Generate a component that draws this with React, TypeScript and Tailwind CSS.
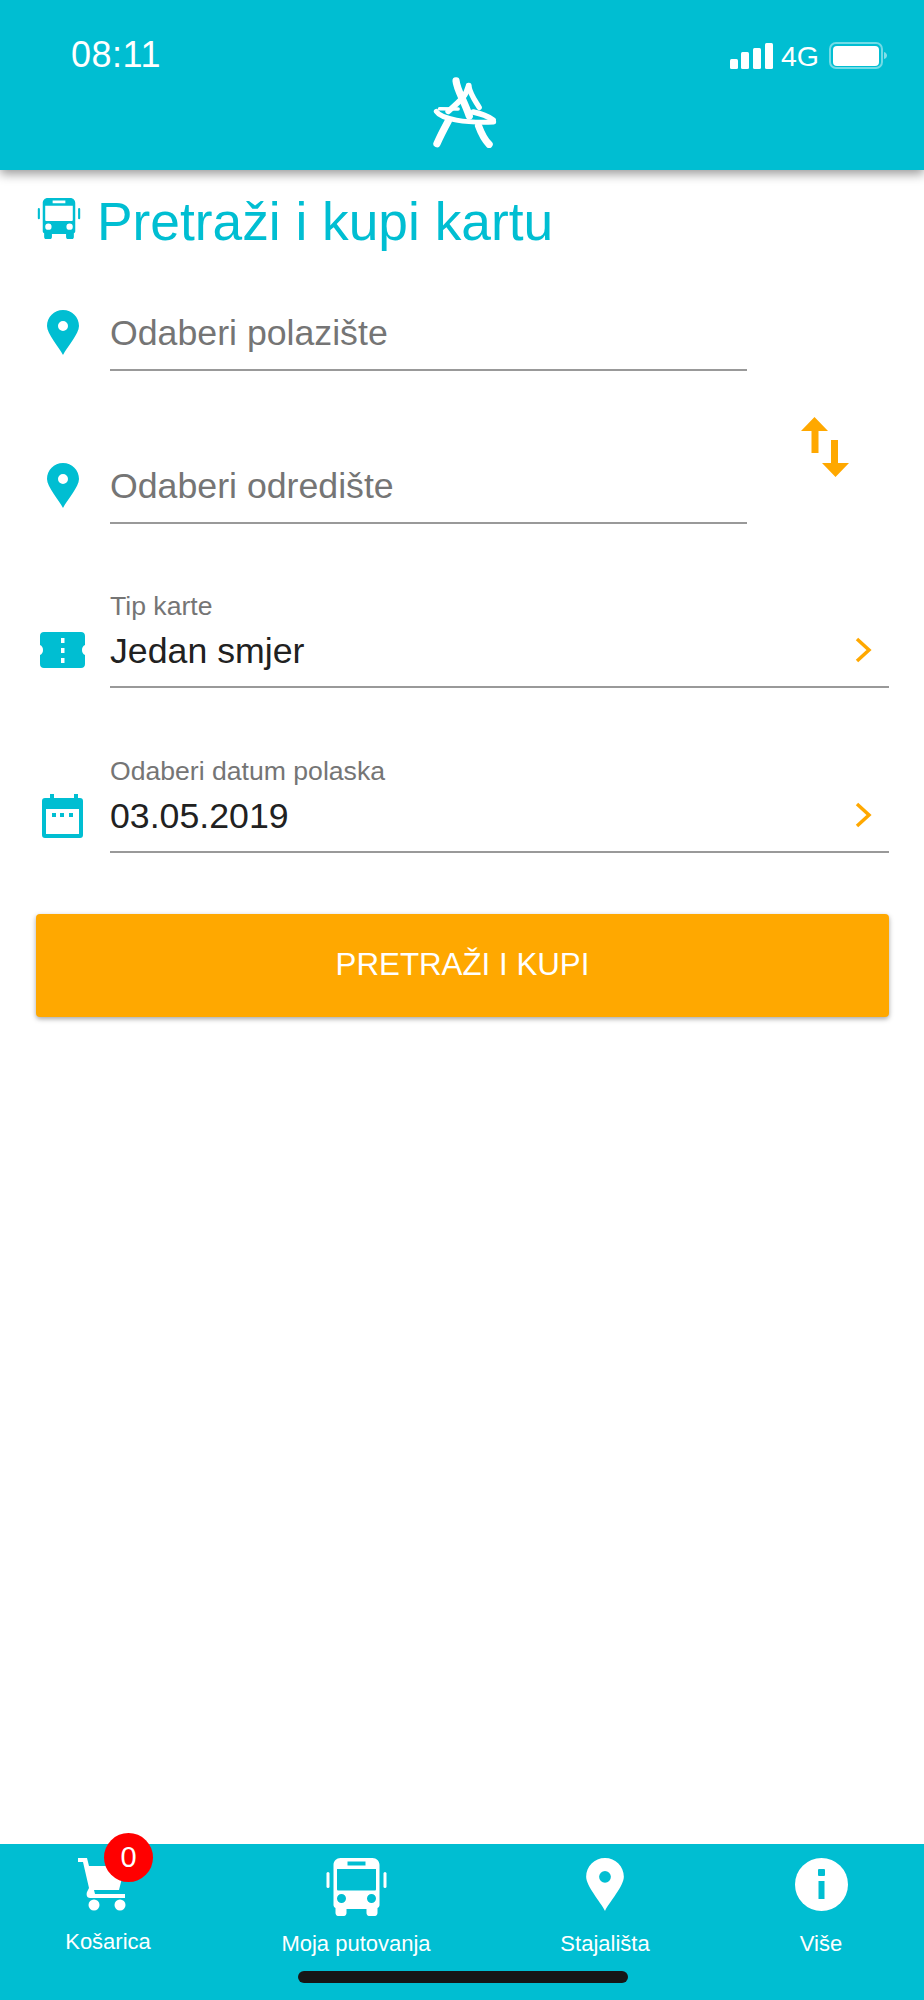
const font = { fontFamily: '"Liberation Sans", Arial, sans-serif' };

function BusIcon({ className }: { className: string }) {
  return (
    <svg viewBox="0 0 60 58" className={className} fill="currentColor">
      <path
        fillRule="evenodd"
        d="M14 0h32c4 0 7 3 7 7v40c0 1.500-1 2.500-2 3v5c0 1.500-1 3-2.500 3h-6c-1.500 0-2.500-1.500-2.500-3v-4H20v4c0 1.500-1 3-2.500 3h-6C10 58 9 56.500 9 55v-5c-1-.5-2-1.500-2-3V7c0-4 3-7 7-7zM21 3.500v4h18v-4zM10.500 11v20c0 1 .5 1.500 1.500 1.500h36c1 0 1.500-.5 1.500-1.500V11zM15 36a4.500 4.500 0 1 0 0 9 4.500 4.500 0 0 0 0-9zM45 36a4.500 4.500 0 1 0 0 9 4.500 4.500 0 0 0 0-9z"
      />
      <rect x="0" y="14" width="3" height="16" rx="1.500" />
      <rect x="57" y="14" width="3" height="16" rx="1.500" />
    </svg>
  );
}

function PinIcon({ className }: { className: string }) {
  return (
    <svg viewBox="0 0 32 45" className={className} fill="currentColor">
      <path
        fillRule="evenodd"
        d="M16 0C7 0 0 7 0 16C0 24 12 37 16 45C20 37 32 24 32 16C32 7 25 0 16 0zm0 11a5 5 0 1 1 0 10 5 5 0 0 1 0-10z"
      />
    </svg>
  );
}

function Chevron() {
  return (
    <svg viewBox="0 0 17 26" className="w-[17px] h-[26px] mr-[17px] mb-[23px]" fill="none" stroke="#ffa800" strokeWidth="3.500">
      <path d="M2 2l12 11L2 24" />
    </svg>
  );
}

function TextField({ placeholder }: { placeholder: string }) {
  return (
    <div className="flex items-end">
      <div className="w-[74px] shrink-0 flex justify-center pr-[20px] pb-[16px]">
        <PinIcon className="w-[32px] h-[45px] text-[#00bed2]" />
      </div>
      <div className="w-[637px] h-[60px] pt-[3px] border-b-2 border-[#999999] text-[35.7px] leading-[38px] text-[#757575]">
        {placeholder}
      </div>
    </div>
  );
}

function SelectField({ label, value, icon }: { label: string; value: string; icon: React.ReactNode }) {
  return (
    <div className="flex items-end">
      <div className="w-[74px] shrink-0 flex justify-center pr-[21px]">{icon}</div>
      <div className="flex-1 border-b-2 border-[#999999] flex items-end justify-between">
        <div>
          <div className="text-[26.6px] leading-[30px] text-[#757575]">{label}</div>
          <div className="text-[35.7px] leading-[40px] pb-[15px] pt-[10px] text-[#212121]">{value}</div>
        </div>
        <Chevron />
      </div>
    </div>
  );
}

function NavItem({ label, icon, offset }: { label: string; icon: React.ReactNode; offset: string }) {
  return (
    <div className="flex flex-col items-center">
      <div className="h-[58px] flex items-start">{icon}</div>
      <div className={`text-[22px] leading-[26px] text-white whitespace-nowrap ${offset}`}>{label}</div>
    </div>
  );
}

export default function App() {
  return (
    <div style={font} className="w-[924px] h-[2000px] flex flex-col bg-white overflow-hidden">
      {/* header */}
      <div className="relative z-10 h-[170px] shrink-0 bg-[#00bed2] shadow-[0_4px_10px_rgba(0,0,0,0.4)] text-white">
        <div className="flex items-start justify-between pt-[35px] pl-[71px] pr-[35px]">
          <div className="text-[36px] leading-[40px] font-medium tracking-[0.5px]">08:11</div>
          <div className="flex items-center gap-[8px] pt-[7px]">
            <svg viewBox="0 0 43 26" className="w-[43px] h-[26px]" fill="white">
              <rect x="0" y="16" width="8" height="10" rx="1.500" />
              <rect x="11" y="9" width="8" height="17" rx="1.500" />
              <rect x="23" y="5" width="8" height="21" rx="1.500" />
              <rect x="35" y="0" width="8" height="26" rx="1.500" />
            </svg>
            <div className="text-[28.5px] leading-[26px] mr-[2px]">4G</div>
            <svg viewBox="0 0 60 27" className="w-[60px] h-[27px]">
              <rect x="1" y="1" width="52" height="25" rx="6" fill="none" stroke="white" strokeOpacity="0.45" strokeWidth="2" />
              <rect x="4" y="4" width="46" height="20" rx="4" fill="white" />
              <path d="M55 10c2 .5 3 2 3 3.500s-1 3-3 3.500z" fill="white" fillOpacity="0.5" />
            </svg>
          </div>
        </div>
        <div className="flex justify-center pt-[2px] pl-[7px]">
          <svg viewBox="105 50 195 215" className="w-[65px] h-[71px]" fill="none" stroke="white" strokeLinecap="round">
            <path d="M174 62c2 25 22 55 40 106" strokeWidth="22" />
            <path d="M212 76c-6 30-28 48-62 78" strokeWidth="17" />
            <path d="M212 76c6 30 20 46 32 66" strokeWidth="16" />
            <path d="M114 154c15 24 90 36 174 32" strokeWidth="15" />
            <path d="M124 146l56 1" strokeWidth="11" />
            <path d="M226 156c24 5 46 14 60 24" strokeWidth="17" />
            <path d="M150 184c-14 26-26 50-34 68" strokeWidth="22" />
            <path d="M242 198c8 22 16 40 32 56" strokeWidth="22" />
          </svg>
        </div>
      </div>

      {/* form */}
      <div className="flex-1 pl-[36px] pr-[35px]">
        <div className="flex items-center gap-[15px] pt-[23px]">
          <BusIcon className="w-[46px] h-[41px] mb-[8px] text-[#00bed2]" />
          <div className="text-[53.3px] leading-[58px] text-[#00bed2] whitespace-nowrap">Pretraži i kupi kartu</div>
        </div>

        <div className="flex items-start justify-between pt-[59px]">
          <div className="flex flex-col gap-[92px]">
            <TextField placeholder="Odaberi polazište" />
            <TextField placeholder="Odaberi odredište" />
          </div>
          <svg viewBox="0 0 48 60" className="w-[48px] h-[60px] mr-[40px] mt-[107px]" fill="#ffa800">
            <path d="M13.500 0L27 14h-9.500v22h-7V14H0z" />
            <path d="M30 23h7v23h11L34.500 60 21 46h9z" />
          </svg>
        </div>

        <div className="flex flex-col gap-[68px] pt-[67px]">
          <SelectField
            label="Tip karte"
            value="Jedan smjer"
            icon={
              <svg viewBox="0 0 45 36" className="w-[45px] h-[36px] mb-[20px]" fill="#00bed2">
                <path
                  fillRule="evenodd"
                  d="M4 0h37c2.500 0 4 1.500 4 4v9c-2 1-3 2.500-3 5s1 4 3 5v9c0 2.500-1.500 4-4 4H4c-2.500 0-4-1.500-4-4v-9c2-1 3-2.500 3-5s-1-4-3-5V4c0-2.500 1.500-4 4-4zm17 6v5h3.500V6zm0 10v5h3.500v-5zm0 10v5h3.500v-5z"
                />
              </svg>
            }
          />
          <SelectField
            label="Odaberi datum polaska"
            value="03.05.2019"
            icon={
              <svg viewBox="0 0 41 44" className="w-[41px] h-[44px] mb-[15px]" fill="#00bed2">
                <path
                  fillRule="evenodd"
                  d="M8 0h4v4h20V0h4v4h2c2 0 3 1 3 3v34c0 2-1 3-3 3H3c-2 0-3-1-3-3V7c0-2 1-3 3-3h5zM4 15v25h33V15z"
                />
                <rect x="10" y="19" width="4" height="4" />
                <rect x="18" y="19" width="4" height="4" />
                <rect x="27" y="19" width="4" height="4" />
              </svg>
            }
          />
        </div>

        <div className="mt-[61px] h-[103px] rounded-[4px] bg-[#ffa800] shadow-[0_2px_5px_rgba(0,0,0,0.35)] flex items-center justify-center text-[31.3px] text-white">
          PRETRAŽI I KUPI
        </div>
      </div>

      {/* bottom nav */}
      <div className="relative h-[156px] shrink-0 bg-[#00bed2]">
        <div className="grid grid-cols-[216px_280px_218px_210px] pt-[14px]">
          <NavItem
            label="Košarica"
            offset="mt-[13px]"
            icon={
              <svg viewBox="0 0 49 53" className="w-[49px] h-[53px] ml-[-11px]" fill="white">
                <path d="M0 0h9l2 8h36l-6 24H16l1 4h30v4H12c-3 0-4-3-3-6l2-4L5 4H0z" />
                <circle cx="16" cy="47" r="5.500" />
                <circle cx="42" cy="47" r="5.500" />
              </svg>
            }
          />
          <NavItem
            label="Moja putovanja"
            offset="mt-[15px]"
            icon={<BusIcon className="w-[61px] h-[58px] text-white" />}
          />
          <NavItem
            label="Stajališta"
            offset="mt-[15px]"
            icon={<PinIcon className="w-[38px] h-[53px] text-white" />}
          />
          <div className="pl-[4px]">
            <NavItem
              label="Više"
              offset="mt-[15px]"
              icon={
                <svg viewBox="0 0 53 53" className="w-[53px] h-[53px]">
                  <circle cx="26.500" cy="26.500" r="26.500" fill="white" />
                  <rect x="23" y="11" width="7" height="7" rx="1" fill="#00bed2" />
                  <rect x="23.500" y="23" width="6" height="18" fill="#00bed2" />
                </svg>
              }
            />
          </div>
        </div>
        <div className="absolute left-[104px] top-[-11px] w-[49px] h-[49px] rounded-full bg-[#ff0000] flex items-center justify-center text-[29px] text-white">
          0
        </div>
        <div className="absolute left-[298px] bottom-[17px] w-[330px] h-[12px] rounded-full bg-[#161616]" />
      </div>
    </div>
  );
}
